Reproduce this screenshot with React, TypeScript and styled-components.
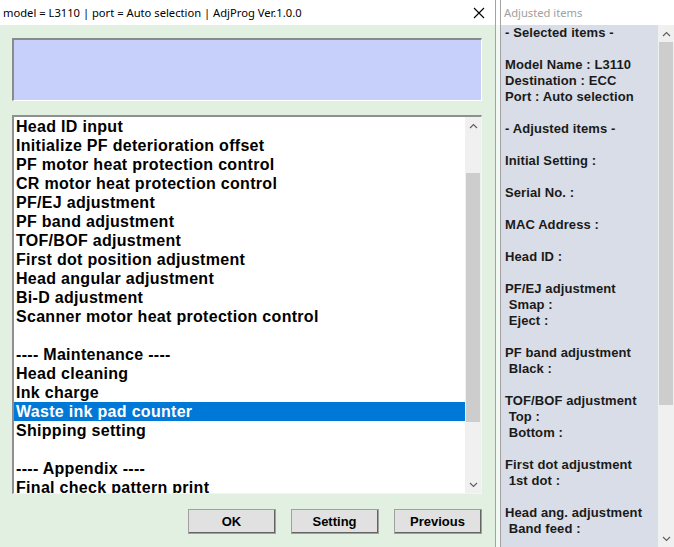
import React from 'react';
import styled, { createGlobalStyle } from 'styled-components';

const GlobalStyle = createGlobalStyle`
  html, body {
    margin: 0;
    padding: 0;
    background: #ffffff;
  }
  body {
    width: 674px;
    height: 547px;
    overflow: hidden;
    font-family: "Liberation Sans", Arial, sans-serif;
  }
`;

const Desktop = styled.div`
  display: flex;
  width: 674px;
  height: 547px;
  overflow: hidden;
`;

const MainWindow = styled.div`
  display: flex;
  flex-direction: column;
  width: 495px;
  flex: none;
  border-right: 1px solid #a3a3a3;
`;

const TitleBar = styled.div<{ $inactive?: boolean }>`
  display: flex;
  align-items: center;
  justify-content: space-between;
  height: 25px;
  flex: none;
  padding: 0 8px 0 3px;
  background: #ffffff;
  font-family: "Noto Sans", "Open Sans", sans-serif;
  font-size: 11.2px;
  color: ${props => props.$inactive ? '#a0a0a0' : '#000000'};
  white-space: nowrap;
  box-sizing: border-box;
`;

const CloseButton = styled.div`
  display: flex;
  align-items: center;
  justify-content: center;
  width: 16px;
  height: 16px;
`;

const WindowBody = styled.div`
  flex: 1;
  display: flex;
  flex-direction: column;
  padding: 13px 13px 0 12px;
  background: #e2f0e2;
`;

const MessageBox = styled.div`
  height: 63px;
  flex: none;
  box-sizing: border-box;
  background: #c6d0fa;
  border-top: 2px solid #8a8a8a;
  border-left: 2px solid #8a8a8a;
  border-right: 1px solid #ffffff;
  border-bottom: 1px solid #ffffff;
`;

const ListBox = styled.div`
  display: flex;
  margin-top: 14px;
  height: 379px;
  flex: none;
  box-sizing: border-box;
  background: #ffffff;
  border-top: 2px solid #8f8f8f;
  border-left: 2px solid #8f8f8f;
  border-right: 1px solid #f4f4f4;
  border-bottom: 1px solid #f4f4f4;
  overflow: hidden;
`;

const ListItems = styled.div`
  flex: 1;
  overflow: hidden;
`;

const ListItem = styled.div<{ $selected?: boolean }>`
  height: 19px;
  line-height: 19px;
  padding-left: 2px;
  font-size: 16px;
  font-weight: bold;
  letter-spacing: 0.3px;
  white-space: pre;
  color: ${props => props.$selected ? '#ffffff' : '#000000'};
  background: ${props => props.$selected ? '#0078d7' : 'transparent'};
`;

const ScrollBar = styled.div<{ $width: number }>`
  display: flex;
  flex-direction: column;
  width: ${props => props.$width}px;
  flex: none;
  background: #f0f0f0;
`;

const ScrollArrow = styled.div`
  display: flex;
  align-items: center;
  justify-content: center;
  height: 17px;
  flex: none;
`;

const ScrollTrack = styled.div`
  flex: 1;
  display: flex;
  flex-direction: column;
`;

const ScrollThumb = styled.div<{ $top: number; $height: number }>`
  margin: ${props => props.$top}px 1px 0 1px;
  height: ${props => props.$height}px;
  background: #cdcdcd;
`;

const ButtonRow = styled.div`
  display: flex;
  justify-content: flex-end;
  gap: 15px;
  margin-top: 15px;
`;

const DialogButton = styled.button`
  width: 88px;
  height: 25px;
  padding: 0;
  box-sizing: border-box;
  background: #e1e1e1;
  border-top: 1px solid #ffffff;
  border-left: 1px solid #ffffff;
  border-right: 2px solid #646464;
  border-bottom: 2px solid #646464;
  outline: 1px solid #a0a0a0;
  outline-offset: -1px;
  font-family: "Liberation Sans", Arial, sans-serif;
  font-size: 13px;
  font-weight: bold;
  color: #000000;
`;

const GapStrip = styled.div`
  width: 4px;
  flex: none;
  display: flex;
  flex-direction: column;
  border-right: 1px solid #a3a3a3;
`;

const StripTop = styled.div`
  height: 25px;
  background: #ffffff;
`;

const StripBody = styled.div`
  flex: 1;
  background: #f2f8f2;
`;

const SideWindow = styled.div`
  flex: 1;
  display: flex;
  flex-direction: column;
  min-width: 0;
`;

const SideBody = styled.div`
  flex: 1;
  display: flex;
  min-height: 0;
`;

const SidePanel = styled.div`
  flex: 1;
  padding-left: 4px;
  background: #d9dde7;
  overflow: hidden;
`;

const SideLine = styled.div`
  height: 16px;
  line-height: 16px;
  font-size: 13px;
  font-weight: bold;
  letter-spacing: 0.1px;
  white-space: pre;
  color: #1a1a1a;
`;

const Chevron = ({ down }: { down?: boolean }) => (
  <svg width="9" height="6" viewBox="0 0 9 6">
    <path
      d={down ? 'M1 1 L4.5 4.5 L8 1' : 'M1 5 L4.5 1.5 L8 5'}
      fill="none"
      stroke="#606060"
      strokeWidth="1.2"
    />
  </svg>
);

const listItems = [
  'Head ID input',
  'Initialize PF deterioration offset',
  'PF motor heat protection control',
  'CR motor heat protection control',
  'PF/EJ adjustment',
  'PF band adjustment',
  'TOF/BOF adjustment',
  'First dot position adjustment',
  'Head angular adjustment',
  'Bi-D adjustment',
  'Scanner motor heat protection control',
  '',
  '---- Maintenance ----',
  'Head cleaning',
  'Ink charge',
  'Waste ink pad counter',
  'Shipping setting',
  '',
  '---- Appendix ----',
  'Final check pattern print',
];

const sideLines = [
  '- Selected items -',
  '',
  'Model Name : L3110',
  'Destination : ECC',
  'Port : Auto selection',
  '',
  '- Adjusted items -',
  '',
  'Initial Setting :',
  '',
  'Serial No. :',
  '',
  'MAC Address :',
  '',
  'Head ID :',
  '',
  'PF/EJ adjustment',
  ' Smap :',
  ' Eject :',
  '',
  'PF band adjustment',
  ' Black :',
  '',
  'TOF/BOF adjustment',
  ' Top :',
  ' Bottom :',
  '',
  'First dot adjustment',
  ' 1st dot :',
  '',
  'Head ang. adjustment',
  ' Band feed :',
];

const SELECTED = 'Waste ink pad counter';

export default function App() {
  return (
    <>
      <GlobalStyle />
      <Desktop>
        <MainWindow>
          <TitleBar>
            <span>model = L3110 | port = Auto selection | AdjProg Ver.1.0.0</span>
            <CloseButton>
              <svg width="12" height="12" viewBox="0 0 12 12">
                <path d="M1 1 L11 11 M11 1 L1 11" stroke="#000" strokeWidth="1.1" />
              </svg>
            </CloseButton>
          </TitleBar>
          <WindowBody>
            <MessageBox />
            <ListBox>
              <ListItems>
                {listItems.map((item, i) => (
                  <ListItem key={i} $selected={item === SELECTED}>
                    {item}
                  </ListItem>
                ))}
              </ListItems>
              <ScrollBar $width={16}>
                <ScrollArrow>
                  <Chevron />
                </ScrollArrow>
                <ScrollTrack>
                  <ScrollThumb $top={39} $height={249} />
                </ScrollTrack>
                <ScrollArrow>
                  <Chevron down />
                </ScrollArrow>
              </ScrollBar>
            </ListBox>
            <ButtonRow>
              <DialogButton>OK</DialogButton>
              <DialogButton>Setting</DialogButton>
              <DialogButton>Previous</DialogButton>
            </ButtonRow>
          </WindowBody>
        </MainWindow>
        <GapStrip>
          <StripTop />
          <StripBody />
        </GapStrip>
        <SideWindow>
          <TitleBar $inactive>Adjusted items</TitleBar>
          <SideBody>
            <SidePanel>
              {sideLines.map((line, i) => (
                <SideLine key={i}>{line}</SideLine>
              ))}
            </SidePanel>
            <ScrollBar $width={16}>
              <ScrollArrow>
                <Chevron />
              </ScrollArrow>
              <ScrollTrack>
                <ScrollThumb $top={0} $height={363} />
              </ScrollTrack>
              <ScrollArrow>
                <Chevron down />
              </ScrollArrow>
            </ScrollBar>
          </SideBody>
        </SideWindow>
      </Desktop>
    </>
  );
}
